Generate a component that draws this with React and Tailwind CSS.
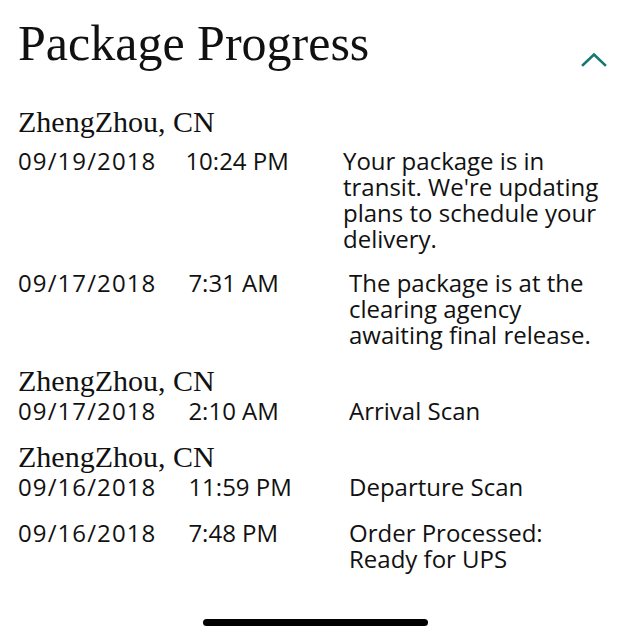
const SERIF = { fontFamily: '"Liberation Serif", "Times New Roman", serif' }

const events = [
  { loc: 'ZhengZhou, CN', locGap: 'mt-[34px]', rowGap: 'mt-[9px]', date: '09/19/2018', time: '10:24 PM', timeX: 'ml-[29px]', descX: 'ml-[343px]', desc: "Your package is in transit. We're updating plans to schedule your delivery." },
  { rowGap: 'mt-[18px]', date: '09/17/2018', time: '7:31 AM', desc: 'The package is at the clearing agency awaiting final release.' },
  { loc: 'ZhengZhou, CN', locGap: 'mt-[16px]', rowGap: 'mt-0', date: '09/17/2018', time: '2:10 AM', desc: 'Arrival Scan' },
  { loc: 'ZhengZhou, CN', locGap: 'mt-[16px]', rowGap: 'mt-0', date: '09/16/2018', time: '11:59 PM', desc: 'Departure Scan' },
  { rowGap: 'mt-[20px]', date: '09/16/2018', time: '7:48 PM', desc: 'Order Processed: Ready for UPS' },
]

function Row({ e }) {
  return (
    <div className={`${e.rowGap} relative flex text-[24px] leading-[26px]`}>
      <div className="shrink-0 w-[330px] flex">
        <span className="tracking-[1.1px]">{e.date}</span>
        <span className={e.timeX || 'ml-[32px]'}>{e.time}</span>
      </div>
      <p className={`flex-1 ${e.descX ? 'ml-[-5px]' : 'ml-[1px]'} pr-[4px]`}>{e.desc}</p>
    </div>
  )
}

export default function App() {
  return (
    <div className="h-[640px] bg-white text-[#111] flex flex-col px-[18px] pt-[15px]" style={{ fontFamily: '"Open Sans", "Noto Sans", sans-serif' }}>
      <div className="flex justify-between items-start">
        <h1 className="text-[50px] leading-[56px]" style={SERIF}>Package Progress</h1>
        <svg className="mt-[37px] mr-[5px]" width="26" height="15" viewBox="0 0 26 15" fill="none">
          <polyline points="2,13 13,2.5 24,13" stroke="#11796f" strokeWidth="2.6" strokeLinecap="square" />
        </svg>
      </div>

      {events.map((e, i) => (
        <div key={i}>
          {e.loc && <div className={`${e.locGap} text-[30px] leading-[34px]`} style={SERIF}>{e.loc}</div>}
          <Row e={e} />
        </div>
      ))}

      <div className="mt-auto mb-[14px] self-center w-[225px] h-[7px] rounded-full bg-black" />
    </div>
  )
}
